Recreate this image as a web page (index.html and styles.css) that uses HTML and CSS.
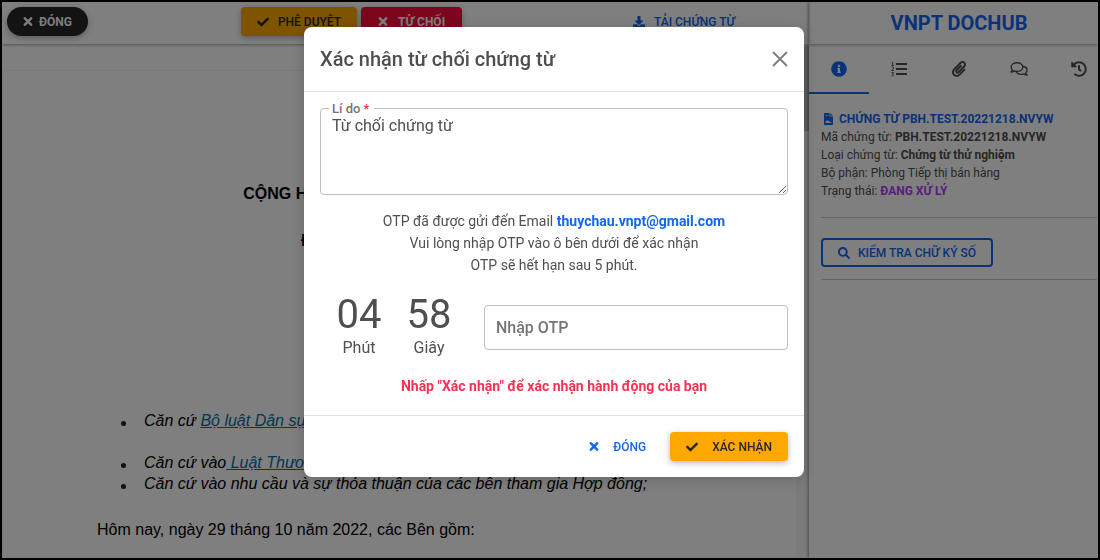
FILE: index.html
```html
<!DOCTYPE html>
<html lang="vi">
<head>
<meta charset="utf-8">
<meta name="viewport" content="width=device-width, initial-scale=1">
<title>VNPT DOCHUB</title>
<link rel="stylesheet" href="styles.css">
</head>
<body>
<svg class="sprite" aria-hidden="true">
  <symbol id="times" viewBox="0 0 352 512"><path d="M242.72 256l100.07-100.07c12.28-12.28 12.28-32.19 0-44.48l-22.24-22.24c-12.28-12.28-32.19-12.28-44.48 0L176 189.28 75.93 89.21c-12.28-12.28-32.19-12.28-44.48 0L9.21 111.45c-12.28 12.28-12.28 32.19 0 44.48L109.28 256 9.21 356.07c-12.28 12.28-12.28 32.19 0 44.48l22.24 22.24c12.28 12.28 32.2 12.28 44.48 0L176 322.72l100.07 100.07c12.28 12.28 32.2 12.28 44.48 0l22.24-22.24c12.28-12.28 12.28-32.19 0-44.48L242.72 256z"/></symbol>
  <symbol id="check" viewBox="0 0 512 512"><path d="M173.898 439.404l-166.4-166.4c-9.997-9.997-9.997-26.206 0-36.204l36.203-36.204c9.997-9.998 26.207-9.998 36.204 0L192 312.69 432.095 72.596c9.997-9.997 26.207-9.997 36.204 0l36.203 36.204c9.997 9.997 9.997 26.206 0 36.204l-294.4 294.401c-9.998 9.997-26.207 9.997-36.204-.001z"/></symbol>
</svg>

<div class="app">
  <main class="viewer">
    <header class="toolbar">
      <button class="btn btn-dark" type="button"><svg class="icon-x"><use href="#times"/></svg>Đóng</button>
      <div class="actions">
        <button class="btn btn-warning" type="button"><svg class="icon"><use href="#check"/></svg>Phê duyệt</button>
        <button class="btn btn-danger" type="button"><svg class="icon-x"><use href="#times"/></svg>Từ chối</button>
      </div>
      <button class="btn btn-link btn-download" type="button"><svg class="icon" viewBox="0 0 512 512"><path d="M216 0h80c13.3 0 24 10.7 24 24v168h87.7c17.8 0 26.7 21.5 14.1 34.1L269.7 378.3c-7.5 7.5-19.8 7.5-27.3 0L90.1 226.1c-12.6-12.6-3.7-34.1 14.1-34.1H192V24c0-13.3 10.7-24 24-24zm296 376v112c0 13.3-10.7 24-24 24H24c-13.3 0-24-10.7-24-24V376c0-13.3 10.7-24 24-24h146.7l49 49c20.1 20.1 52.5 20.1 72.6 0l49-49H488c13.3 0 24 10.7 24 24z"/></svg>Tải chứng từ</button>
    </header>
    <div class="scroller">
      <article class="page">
        <h2 class="doc-title">CỘNG HÒA XÃ HỘI CHỦ NGHĨA VIỆT NAM</h2>
        <h3 class="doc-motto">Độc lập</h3>
        <ul class="doc-list">
          <li>Căn cứ <a href="#">Bộ luật Dân sự 2015</a></li>
          <li>Căn cứ vào<a href="#"> Luật Thương mại 2005</a></li>
          <li>Căn cứ vào nhu cầu và sự thỏa thuận của các bên tham gia Hợp đồng;</li>
        </ul>
        <p class="doc-text">Hôm nay, ngày 29 tháng 10 năm 2022, các Bên gồm:</p>
      </article>
      <div class="track"><div class="thumb"></div></div>
    </div>
  </main>

  <aside class="sidebar">
    <h1 class="brand">VNPT DOCHUB</h1>
    <nav class="tabs">
      <button class="tab tab-active" type="button" aria-label="Thông tin"><svg class="tab-icon" viewBox="0 0 512 512"><path d="M256 8C119.043 8 8 119.083 8 256c0 136.997 111.043 248 248 248s248-111.003 248-248C504 119.083 392.957 8 256 8zm0 110c23.196 0 42 18.804 42 42s-18.804 42-42 42-42-18.804-42-42 18.804-42 42-42zm56 254c0 6.627-5.373 12-12 12h-88c-6.627 0-12-5.373-12-12v-24c0-6.627 5.373-12 12-12h12v-64h-12c-6.627 0-12-5.373-12-12v-24c0-6.627 5.373-12 12-12h64c6.627 0 12 5.373 12 12v100h12c6.627 0 12 5.373 12 12v24z"/></svg></button>
      <button class="tab" type="button" aria-label="Danh sách"><svg class="tab-icon" viewBox="0 0 16 16"><path d="M5 2h11v2H5zM5 7h11v2H5zM5 12h11v2H5z"/><path class="stroke" d="M.8 1.200h.9V4.400M.5 4.500h2.400M.6 6.200h1.800v1.700L.7 9.600h2.200M.6 11.500h2l-1.200 1.600c1.800 0 1.600 2-.9 1.900"/></svg></button>
      <button class="tab" type="button" aria-label="Tệp đính kèm"><svg class="tab-icon" viewBox="0 0 448 512"><path d="M43.246 466.142c-58.43-60.289-57.341-157.511 1.386-217.581L254.392 34c44.316-45.332 116.351-45.336 160.671 0 43.89 44.894 43.943 117.329 0 162.276L232.214 383.128c-29.855 30.537-78.633 30.111-107.982-.998-28.275-29.97-27.368-77.473 1.452-106.953l143.743-146.835c6.182-6.314 16.312-6.422 22.626-.241l22.861 22.379c6.315 6.182 6.422 16.312.241 22.626L171.427 319.927c-4.932 5.045-5.236 13.428-.648 18.292 4.372 4.634 11.245 4.711 15.688.165l182.849-186.851c19.613-20.062 19.613-52.725-.011-72.798-19.189-19.627-49.957-19.637-69.154 0L90.39 293.295c-34.763 35.56-35.299 93.12-1.191 128.313 34.01 35.093 88.985 35.137 123.058.286l172.06-175.999c6.177-6.319 16.307-6.433 22.626-.256l22.877 22.364c6.319 6.177 6.434 16.307.256 22.626l-172.06 175.998c-59.576 60.938-155.943 60.216-214.77-.485z"/></svg></button>
      <button class="tab" type="button" aria-label="Trao đổi"><svg class="tab-icon tab-icon-wide" viewBox="0 0 18 16"><path class="outline" d="M7 1.800c3.400 0 5.900 1.900 5.900 4.300S10.400 10.400 7 10.400c-1 0-1.900-.2-2.700-.5-.9.700-2 1.100-3.300 1.100.7-.7 1.200-1.500 1.400-2.200C1.500 8 1.100 7.100 1.100 6.100c0-2.400 2.500-4.300 5.900-4.300z"/><path class="outline" d="M13 5.300c2.400.5 4 2 4 3.900 0 1-.5 1.900-1.200 2.600.2.800.7 1.500 1.300 2.200-1.200 0-2.300-.4-3.200-1.100-.9.300-1.700.5-2.700.5-2.200 0-4-.9-4.900-2.200"/></svg></button>
      <button class="tab" type="button" aria-label="Lịch sử"><svg class="tab-icon" viewBox="0 0 512 512"><path d="M504 255.531c.253 136.640-111.180 248.372-247.820 248.468-59.015.042-113.223-20.530-155.822-54.911-11.077-8.940-11.905-25.541-1.839-35.607l11.267-11.267c8.609-8.609 22.353-9.551 31.891-1.984C173.062 425.135 212.781 440 256 440c101.705 0 184-82.311 184-184 0-101.705-82.311-184-184-184-48.814 0-93.149 18.969-126.068 49.932l50.754 50.754c10.080 10.080 2.941 27.314-11.313 27.314H24c-8.837 0-16-7.163-16-16V38.627c0-14.254 17.234-21.393 27.314-11.314l49.372 49.372C129.209 34.136 189.552 8 256 8c136.810 0 247.747 110.780 248 247.531zm-180.912 78.784l9.823-12.630c8.138-10.463 6.253-25.542-4.210-33.679L288 256.349V152c0-13.255-10.745-24-24-24h-16c-13.255 0-24 10.745-24 24v135.651l65.409 50.874c10.463 8.137 25.541 6.253 33.679-4.210z"/></svg></button>
    </nav>
    <section class="info">
      <div class="doc-name"><svg class="file-icon" viewBox="0 0 9 12"><path fill-rule="evenodd" d="M1 0h4.500v3.500H9V11c0 .6-.4 1-1 1H1c-.6 0-1-.4-1-1V1c0-.6.4-1 1-1zM6.200 0L9 2.800H6.200zM1.500 2v.8h2.200V2zM1.500 10h6V9H5.800l-.9-1.600-1 1L3.300 6.800 1.500 9z"/></svg>CHỨNG TỪ PBH.TEST.20221218.NVYW</div>
      <div>Mã chứng từ: <b>PBH.TEST.20221218.NVYW</b></div>
      <div>Loại chứng từ: <b>Chứng từ thử nghiệm</b></div>
      <div>Bộ phận: Phòng Tiếp thị bán hàng</div>
      <div>Trạng thái: <b class="status">ĐANG XỬ LÝ</b></div>
      <hr class="rule rule-first">
      <button class="btn btn-outline" type="button"><svg class="icon" viewBox="0 0 512 512"><path d="M505 442.700L405.300 343c-4.500-4.500-10.600-7-17-7H372c27.600-35.300 44-79.700 44-128C416 93.100 322.900 0 208 0S0 93.100 0 208s93.100 208 208 208c48.300 0 92.700-16.400 128-44v16.300c0 6.400 2.500 12.500 7 17l99.700 99.700c9.400 9.400 24.600 9.400 33.900 0l28.300-28.300c9.400-9.400 9.400-24.600.1-34zM208 336c-70.700 0-128-57.200-128-128 0-70.700 57.200-128 128-128 70.700 0 128 57.200 128 128 0 70.700-57.200 128-128 128z"/></svg>Kiểm tra chữ ký số</button>
      <hr class="rule">
    </section>
  </aside>
</div>

<div class="backdrop">
  <form class="modal" role="dialog" aria-labelledby="modal-title">
    <header class="modal-header">
      <h2 class="modal-title" id="modal-title">Xác nhận từ chối chứng từ</h2>
      <button class="close" type="button" aria-label="Đóng"><svg class="close-icon" viewBox="0 0 16 16"><path d="M1 1l14 14M15 1L1 15"/></svg></button>
    </header>
    <div class="modal-body">
      <div class="field">
        <label class="field-label" for="reason">Lí do <span class="required">*</span></label>
        <textarea class="control reason" id="reason">Từ chối chứng từ</textarea>
      </div>
      <p class="notice">OTP đã được gửi đến Email <b class="email">thuychau.vnpt@gmail.com</b><br>Vui lòng nhập OTP vào ô bên dưới để xác nhận<br>OTP sẽ hết hạn sau 5 phút.</p>
      <div class="otp-row">
        <div class="timer">
          <div class="unit"><span class="digits">04</span><span>Phút</span></div>
          <div class="unit"><span class="digits">58</span><span>Giây</span></div>
        </div>
        <input class="control otp" type="text" placeholder="Nhập OTP" aria-label="Nhập OTP">
      </div>
      <p class="warning">Nhấp "Xác nhận" để xác nhận hành động của bạn</p>
    </div>
    <footer class="modal-footer">
      <button class="btn btn-link" type="button"><svg class="icon-x"><use href="#times"/></svg>Đóng</button>
      <button class="btn btn-warning" type="submit"><svg class="icon"><use href="#check"/></svg>Xác nhận</button>
    </footer>
  </form>
</div>
</body>
</html>
```
FILE: styles.css
```css
* {
  box-sizing: border-box;
}

body {
  margin: 0;
  height: 100vh;
  overflow: hidden;
  border: 2px solid #000;
  color: #4f4f4f;
  font: 16px/24px Roboto, "Noto Sans", sans-serif;
}

h1, h2, h3, p, ul {
  margin: 0;
}

svg {
  fill: currentColor;
  flex: none;
}

.sprite {
  position: absolute;
  width: 0;
  height: 0;
}

/* Buttons */
.btn {
  display: inline-flex;
  align-items: center;
  gap: 9px;
  height: 29px;
  padding: 0 16px;
  border: 0;
  border-radius: 4px;
  font: 500 12px/18px Roboto, "Noto Sans", sans-serif;
  text-transform: uppercase;
  white-space: nowrap;
  box-shadow: 0 2px 5px rgba(0, 0, 0, .2), 0 2px 10px rgba(0, 0, 0, .1);
}

.icon {
  width: 12px;
  height: 12px;
}

.icon-x {
  width: 10px;
  height: 13px;
}

.btn-dark {
  gap: 6px;
  background: #262626;
  color: #fbfbfb;
  border-radius: 15px;
  font-weight: 700;
}

.btn-warning {
  background: #ffa900;
  color: #262626;
}

.btn-danger {
  background: #fa0b3c;
  color: #fff;
  font-weight: 700;
}

.btn-link {
  background: transparent;
  color: #1266f1;
  box-shadow: none;
}

.btn-outline {
  align-self: flex-start;
  gap: 8px;
  padding: 0 15px;
  border: 2px solid #1266f1;
  background: transparent;
  color: #1266f1;
  box-shadow: none;
}

/* Application */
.app {
  display: grid;
  grid-template-columns: minmax(0, 1fr) 289px;
  height: 100%;
}

.viewer {
  display: flex;
  flex-direction: column;
  min-width: 0;
}

.toolbar {
  display: flex;
  align-items: flex-start;
  height: 42px;
  padding: 5px;
  box-shadow: 0 1px 3px rgba(0, 0, 0, .35);
}

.actions {
  display: flex;
  gap: 4px;
  margin-left: 153px;
}

.toolbar .btn-danger {
  gap: 10px;
  padding: 0 17px;
}

.btn-download {
  margin-left: auto;
  margin-right: 53px;
}

.scroller {
  display: flex;
  flex: 1;
  margin-top: 2px;
  min-height: 0;
}

.page {
  flex: 1;
  margin-top: 24px;
  padding: 112px 0 0 94px;
  border: 1px solid #f4f4f4;
  color: #000;
  font: 16px/21px "Liberation Sans", Arial, sans-serif;
}

.doc-title,
.doc-motto {
  font-size: 16px;
}

.doc-title {
  margin-right: 84px;
  text-align: center;
}

.doc-motto {
  margin-top: 26px;
  padding-left: 204px;
}

.doc-list {
  margin-top: 159px;
  padding-left: 24px;
  font-style: italic;
  list-style: none;
}

.doc-list li {
  display: flex;
  align-items: center;
  white-space: pre;
}

.doc-list li::before {
  content: "";
  width: 5px;
  height: 5px;
  margin: 5px 18px 0 0;
  border-radius: 50%;
  background: #222;
}

.doc-list li:first-child {
  margin-bottom: 21px;
}

.doc-list a {
  color: #0070a8;
}

.doc-text {
  margin-top: 25px;
}

.track {
  width: 12px;
  background: #f6f6f6;
}

.thumb {
  height: 85px;
  background: #c1c1c1;
}

.sidebar {
  overflow: hidden;
  box-shadow: -1px 0 3px rgba(0, 0, 0, .4);
}

.brand {
  height: 42px;
  padding-left: 11px;
  box-shadow: 0 1px 3px rgba(0, 0, 0, .35);
  color: #1266f1;
  font-size: 20px;
  font-weight: 700;
  line-height: 42px;
  text-align: center;
}

.tabs {
  display: flex;
  margin-top: 1px;
}

.tab {
  display: flex;
  flex: 0 0 60px;
  justify-content: center;
  align-items: center;
  height: 49px;
  padding: 0;
  border: 0;
  border-bottom: 2px solid transparent;
  background: transparent;
  color: #4f4f4f;
}

.tab-active {
  border-color: #1266f1;
  color: #1266f1;
}

.tab-icon {
  width: 16px;
  height: 16px;
}

.tab-icon-wide {
  width: 18px;
}

.stroke {
  fill: none;
  stroke: currentColor;
  stroke-width: .9;
}

.outline {
  fill: none;
  stroke: currentColor;
  stroke-width: 1.4;
  stroke-linejoin: round;
}

.info {
  display: flex;
  flex-direction: column;
  padding: 16px 1px 0 12px;
  font-size: 12px;
  line-height: 18px;
}

.doc-name {
  display: flex;
  align-items: center;
  gap: 6px;
  padding-left: 3px;
  color: #1266f1;
  font-weight: 700;
}

.file-icon {
  width: 9px;
  height: 12px;
}

.status {
  color: #b23cfd;
}

.rule {
  width: 100%;
  margin: 12px 0 0;
  border: 0;
  border-top: 1px solid #c8c8c8;
}

.rule-first {
  margin: 17px 0 20px;
}

/* Dialog */
.backdrop {
  position: fixed;
  inset: 2px;
  display: flex;
  justify-content: center;
  align-items: flex-start;
  padding: 25px 0 0 8px;
  background: rgba(0, 0, 0, .5);
}

.modal {
  width: 500px;
  max-width: 100%;
  border-radius: 8px;
  background: #fff;
  box-shadow: 0 2px 15px rgba(0, 0, 0, .2);
}

.modal-header {
  display: flex;
  justify-content: space-between;
  align-items: center;
  padding: 20px 16px;
  border-bottom: 1px solid #e0e0e0;
}

.modal-title {
  font-size: 20px;
  font-weight: 500;
  line-height: 24px;
}

.close {
  display: flex;
  padding: 0;
  border: 0;
  background: transparent;
  color: #808080;
}

.close-icon {
  width: 16px;
  height: 16px;
  overflow: visible;
  stroke: currentColor;
  stroke-width: 2;
}

.modal-body {
  padding: 16px 16px 17px;
}

.field {
  position: relative;
}

.field-label {
  position: absolute;
  top: -7px;
  left: 9px;
  padding: 0 5px 0 3px;
  background: #fff;
  color: #757575;
  font-size: 13px;
  font-weight: 500;
  line-height: 16px;
}

.required {
  color: #f93154;
}

.control {
  display: block;
  width: 100%;
  border: 1px solid #bdbdbd;
  border-radius: 4px;
  background: transparent;
  color: #4f4f4f;
  font: 16px/24px Roboto, "Noto Sans", sans-serif;
}

.reason {
  height: 87px;
  padding: 5px 11px;
  resize: vertical;
}

.notice {
  margin-top: 15px;
  font-size: 14px;
  line-height: 22px;
  text-align: center;
}

.email {
  color: #1266f1;
}

.otp-row {
  display: flex;
  align-items: center;
  gap: 20px;
  margin-top: 18px;
}

.timer {
  display: flex;
  flex: 1;
  padding-left: 4px;
}

.unit {
  display: flex;
  flex: 1;
  flex-direction: column;
  text-align: center;
}

.digits {
  font-size: 40px;
  line-height: 42px;
}

.otp {
  width: 304px;
  height: 45px;
  padding: 0 11px;
}

.otp::placeholder {
  color: #757575;
  font-weight: 500;
  opacity: 1;
}

.warning {
  margin-top: 14px;
  color: #f93154;
  font-size: 14px;
  font-weight: 700;
  line-height: 24px;
  text-align: center;
}

.modal-footer {
  display: flex;
  justify-content: flex-end;
  gap: 8px;
  padding: 16px;
  border-top: 1px solid #e0e0e0;
}

.modal-footer .btn {
  gap: 14px;
}
```
